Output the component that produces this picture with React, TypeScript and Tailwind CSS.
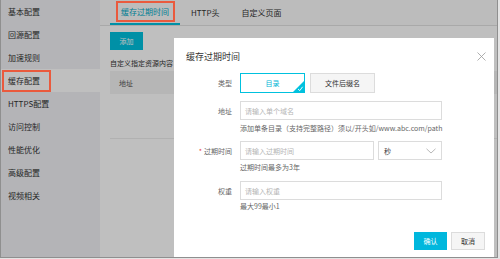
import React from "react";

const font = { fontFamily: '"Noto Sans CJK SC", "Noto Sans", sans-serif' };

const sideItems = [
  "基本配置",
  "回源配置",
  "加速规则",
  "缓存配置",
  "HTTPS配置",
  "访问控制",
  "性能优化",
  "高级配置",
  "视频相关",
];

function Label({ text, required }: { text: string; required?: boolean }) {
  return (
    <div className="w-[66px] h-[19px] shrink-0 pr-[8px] flex items-center justify-end text-[7px] leading-[10px] text-[#666]">
      {required && <span className="text-[#e64545] mr-[2px]">*</span>}
      {text}
    </div>
  );
}

function Input({ placeholder, w }: { placeholder: string; w: string }) {
  return (
    <div
      className={`${w} h-[19px] border border-[#dcdcdc] flex items-center pl-[4px] text-[7px] leading-[10px] text-[#b5b5b5]`}
    >
      {placeholder}
    </div>
  );
}

export default function App() {
  return (
    <div className="w-[500px] h-[259px] bg-[#e4e4e4] overflow-hidden" style={font}>
      <div className="relative w-[498px] h-[258px] border-l border-r border-b border-[#8f8f8f] overflow-hidden bg-white">
        <div className="flex h-full">
          {/* Sidebar */}
          <div className="w-[99px] h-full bg-[#f0f1f5] flex flex-col">
            {sideItems.map((t, i) => (
              <div
                key={t}
                className={`h-[23px] flex items-center pl-[7px] text-[8px] leading-[10px] text-[#333] ${
                  i === 3 ? "bg-white" : ""
                }`}
              >
                {t}
              </div>
            ))}
          </div>
          {/* Main */}
          <div className="flex-1 flex flex-col bg-white">
            <div className="h-[26px] bg-[#fbfbfb] border-b border-[#e2e2e2] flex items-end pl-[10px]">
              <div className="h-full px-[11px] flex items-center border-b-2 border-[#00c1de] text-[8px] leading-[10px] text-[#00a9c6]">
                缓存过期时间
              </div>
              <div className="h-full px-[11px] flex items-center text-[8px] leading-[10px] text-[#333]">
                HTTP头
              </div>
              <div className="h-full px-[11px] flex items-center text-[8px] leading-[10px] text-[#333]">
                自定义页面
              </div>
            </div>
            <div className="pl-[10px] pt-[6px] flex flex-col">
              <div className="w-[33px] h-[18px] bg-[#00c1de] text-white text-[7px] leading-[10px] flex items-center justify-center">
                添加
              </div>
              <div className="mt-[8px] text-[7px] leading-[10px] text-[#333] whitespace-nowrap">
                自定义指定资源内容
              </div>
              <div className="mt-[3px] h-[23px] bg-[#f3f3f3] flex items-center pl-[9px] text-[7px] leading-[10px] text-[#555]">
                地址
              </div>
              <div className="h-[45px] border-b border-[#ececec]" />
            </div>
          </div>
        </div>

        {/* Overlay */}
        <div className="absolute inset-0 bg-black/25" />

        {/* Annotations */}
        <div className="absolute left-[1px] top-[70px] w-[49px] h-[22px] border-2 border-[#ea5a3d]" />
        <div className="absolute left-[115px] top-[1px] w-[59px] h-[21px] border-2 border-[#ea5a3d]" />

        {/* Modal */}
        <div className="absolute left-[173px] top-[38px] w-[320px] h-[240px] bg-white flex flex-col">
          <svg
            className="absolute right-[8px] top-[14px]"
            width="9"
            height="9"
            viewBox="0 0 9 9"
          >
            <path d="M0.5 0.5 L8.5 8.5 M8.5 0.5 L0.5 8.5" stroke="#9a9a9a" strokeWidth="0.8" fill="none" />
          </svg>
          <div className="pl-[12px] pt-[13px] text-[9px] leading-[12px] text-[#333]">缓存过期时间</div>

          {/* 类型 */}
          <div className="mt-[10px] flex h-[20px] items-center">
            <Label text="类型" />
            <div className="flex gap-[5px]">
              <div className="relative w-[65px] h-[20px] border border-[#00c1de] bg-white flex items-center justify-center text-[7px] leading-[10px] text-[#00b5d6]">
                目录
                <svg className="absolute right-0 bottom-0" width="11" height="11" viewBox="0 0 11 11">
                  <path d="M11 0 L11 11 L0 11 Z" fill="#00c1de" />
                  <path d="M5 8 L6.8 9.6 L9.6 5.8" stroke="#fff" strokeWidth="0.9" fill="none" />
                </svg>
              </div>
              <div className="w-[65px] h-[20px] border border-[#dcdcdc] bg-[#f5f5f5] flex items-center justify-center text-[7px] leading-[10px] text-[#333]">
                文件后缀名
              </div>
            </div>
          </div>

          {/* 地址 */}
          <div className="mt-[8px] flex items-start">
            <Label text="地址" />
            <div className="flex flex-col">
              <Input placeholder="请输入单个域名" w="w-[202px]" />
              <div className="mt-[2px] text-[7px] leading-[12px] text-[#666] whitespace-nowrap">
                添加单条目录（支持完整路径）须以/开头如/www.abc.com/path
              </div>
            </div>
          </div>

          {/* 过期时间 */}
          <div className="mt-[7px] flex items-start">
            <Label text="过期时间" required />
            <div className="flex flex-col">
              <div className="flex gap-[4px]">
                <Input placeholder="请输入过期时间" w="w-[134px]" />
                <div className="w-[64px] h-[19px] border border-[#dcdcdc] flex items-center justify-between pl-[5px] pr-[5px] text-[7px] leading-[10px] text-[#333]">
                  秒
                  <svg width="10" height="6" viewBox="0 0 10 6">
                    <path d="M0.5 0.8 L5 5 L9.5 0.8" stroke="#9a9a9a" strokeWidth="0.7" fill="none" />
                  </svg>
                </div>
              </div>
              <div className="mt-[1px] text-[7px] leading-[12px] text-[#666]">过期时间最多为3年</div>
            </div>
          </div>

          {/* 权重 */}
          <div className="mt-[8px] flex items-start">
            <Label text="权重" />
            <div className="flex flex-col">
              <Input placeholder="请输入权重" w="w-[202px]" />
              <div className="text-[7px] leading-[12px] text-[#666]">最大99最小1</div>
            </div>
          </div>

          {/* Footer */}
          <div className="mt-[20px] flex justify-end gap-[4px] pr-[9px]">
            <div className="w-[33px] h-[18px] bg-[#00b7dd] text-white text-[7px] leading-[10px] flex items-center justify-center">
              确认
            </div>
            <div className="w-[34px] h-[18px] bg-[#f5f5f5] border border-[#dcdcdc] text-[#333] text-[7px] leading-[10px] flex items-center justify-center">
              取消
            </div>
          </div>
        </div>
      </div>
    </div>
  );
}
